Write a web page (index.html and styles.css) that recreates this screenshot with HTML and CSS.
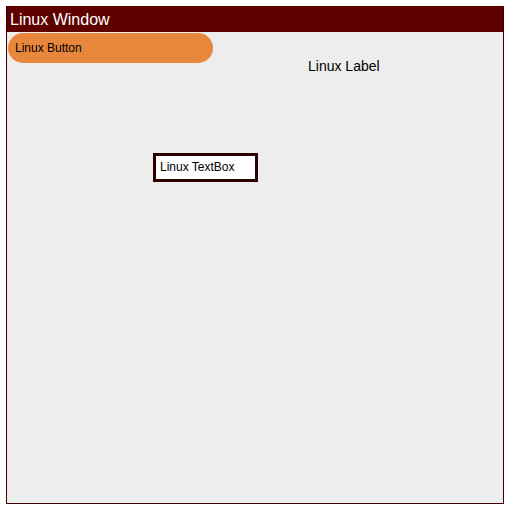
FILE: index.html
```html
<!DOCTYPE html>
<html>
<head>
<meta charset="utf-8">
<link rel="stylesheet" href="styles.css">
</head>
<body>
<div class="window">
  <div class="titlebar">Linux Window</div>
  <div class="canvas">
    <button class="btn">Linux Button</button>
    <span class="label">Linux Label</span>
    <div class="textbox">Linux TextBox</div>
  </div>
</div>
</body>
</html>
```
FILE: styles.css
```css
html, body { margin: 0; padding: 0; background: #ffffff; }
body { padding: 6px; font-family: "Liberation Sans", Arial, sans-serif; }
.window {
  width: 496px;
  height: 496px;
  border: 1px solid #3a0000;
  border-top-color: #5e0000;
  background: #ededed;
  display: flex;
  flex-direction: column;
}
.titlebar {
  height: 25px;
  background: #5e0000;
  color: #ffffff;
  font-size: 16px;
  line-height: 25px;
  padding-left: 3px;
}
.canvas { position: relative; flex: 1; }
.btn {
  display: block;
  margin: 1px 0 0 1px;
  width: 205px;
  height: 30px;
  border: none;
  border-radius: 15px;
  background: #e8873b;
  color: #000;
  font-family: "Liberation Sans", Arial, sans-serif;
  font-size: 12px;
  text-align: left;
  padding: 0 0 0 7px;
}
.label {
  position: absolute;
  left: 301px;
  top: 26px;
  font-size: 14px;
  color: #000;
}
.textbox {
  position: absolute;
  left: 146px;
  top: 121px;
  width: 95px;
  height: 23px;
  border: 3px solid #2d0000;
  background: #fff;
  font-size: 12px;
  line-height: 23px;
  padding-left: 4px;
  box-sizing: content-box;
}
```
